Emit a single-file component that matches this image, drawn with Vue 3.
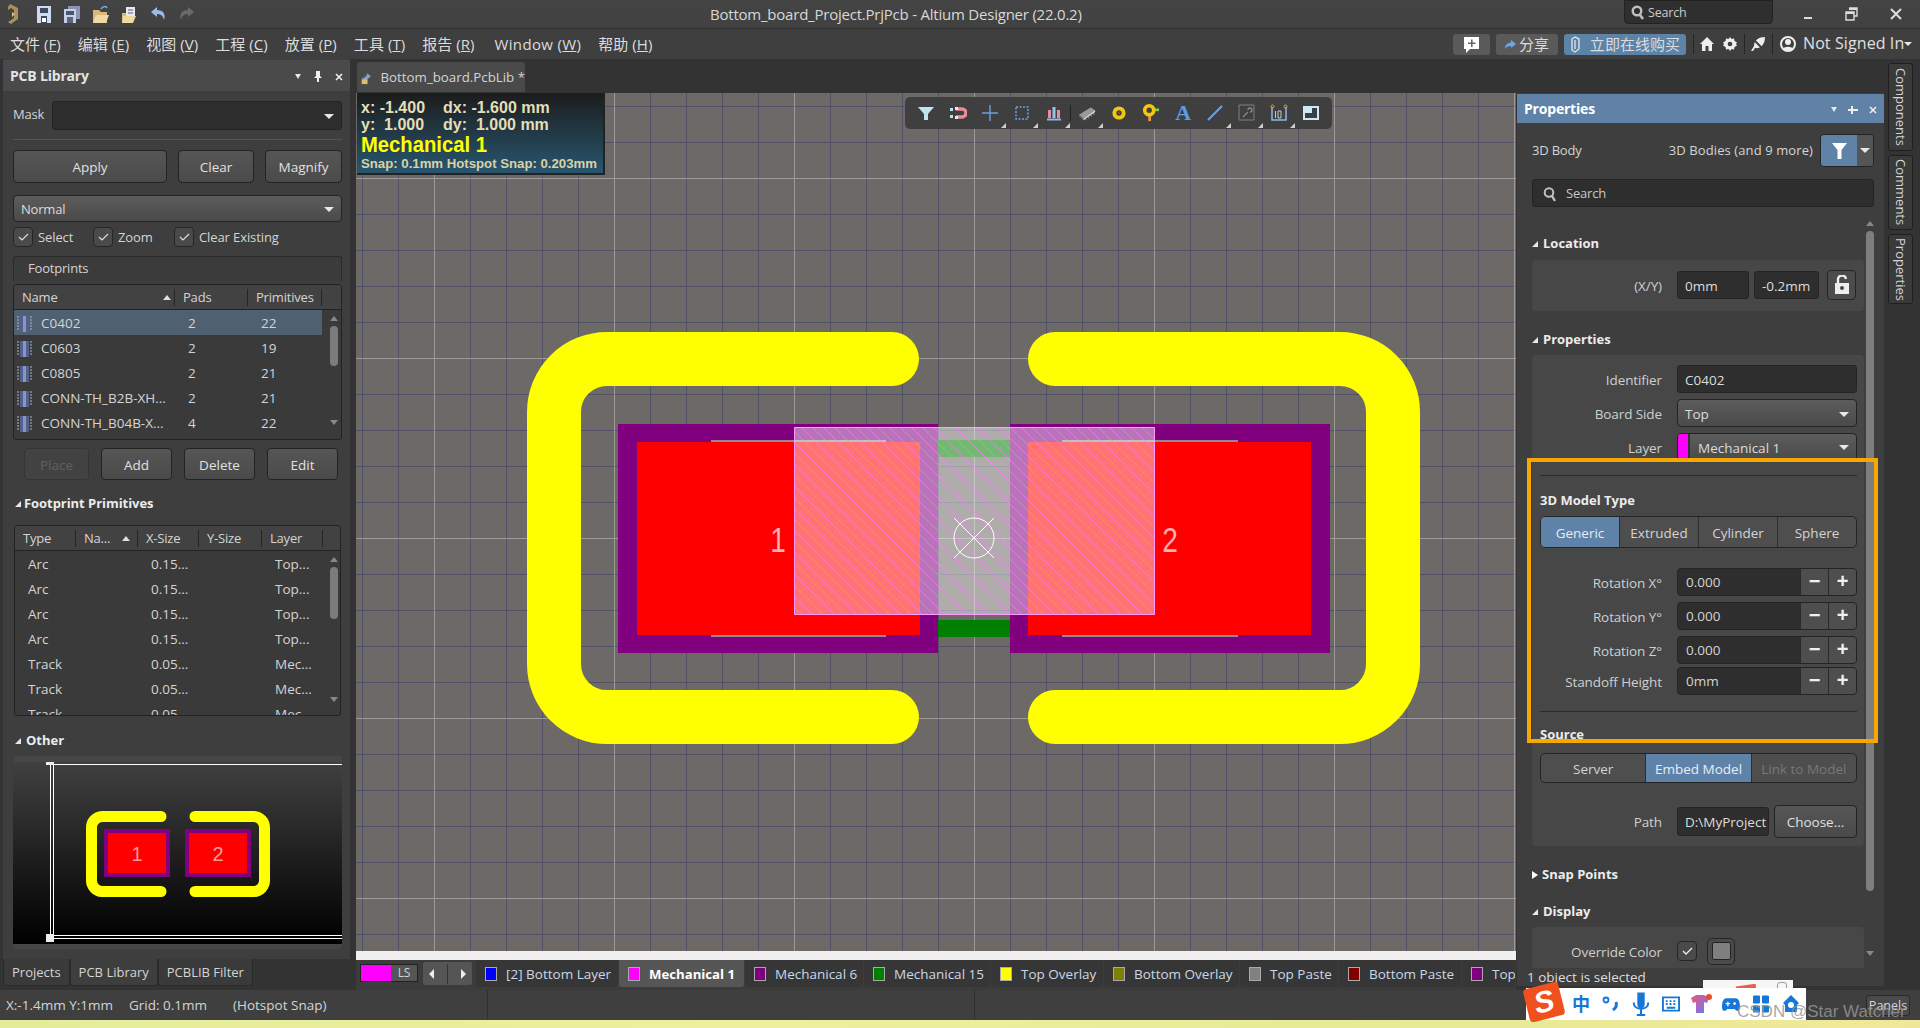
<script setup>
const menus = [
  { t: '文件', k: 'F' }, { t: '编辑', k: 'E' }, { t: '视图', k: 'V' }, { t: '工程', k: 'C' }, { t: '放置', k: 'P' },
  { t: '工具', k: 'T' }, { t: '报告', k: 'R' }, { t: 'Window', k: 'W' }, { t: '帮助', k: 'H' }
]
const footprints = [
  ['C0402', '2', '22'], ['C0603', '2', '19'], ['C0805', '2', '21'],
  ['CONN-TH_B2B-XH...', '2', '21'], ['CONN-TH_B04B-X...', '4', '22']
]
const primitives = [
  ['Arc', '0.15...', 'Top...'], ['Arc', '0.15...', 'Top...'], ['Arc', '0.15...', 'Top...'], ['Arc', '0.15...', 'Top...'],
  ['Track', '0.05...', 'Mec...'], ['Track', '0.05...', 'Mec...'], ['Track', '0.05...', 'Mec...']
]
const layers = [
  { n: '[2] Bottom Layer', c: '#0000ff', w: 142 }, { n: 'Mechanical 1', c: '#ff00ff', w: 125, on: true },
  { n: 'Mechanical 6', c: '#800080', w: 118 }, { n: 'Mechanical 15', c: '#008000', w: 126 },
  { n: 'Top Overlay', c: '#ffff00', w: 112 }, { n: 'Bottom Overlay', c: '#808000', w: 135 },
  { n: 'Top Paste', c: '#808080', w: 98 }, { n: 'Bottom Paste', c: '#800000', w: 122 }, { n: 'Top', c: '#800080', w: 53 }
]
const rotations = [
  { l: 'Rotation X°', v: '0.000' }, { l: 'Rotation Y°', v: '0.000' }, { l: 'Rotation Z°', v: '0.000' }, { l: 'Standoff Height', v: '0mm', tight: true }
]
</script>

<template>
  <div class="app">
    <header class="titlebar">
      <div class="quick">
        <svg class="logo" width="16" height="24" viewBox="0 0 16 24"><path d="M4 2l8 4v11l-7 5-3-2 6-4V8L5 6 2 8V5z" fill="#a8925a"/><path d="M6 10l3 2-3 3z" fill="#d8c48a"/></svg>
        <svg width="14" height="17" viewBox="0 0 14 17"><path d="M0 0h14v17H0z" fill="#cfdcf0"/><path d="M3 2h8v5H3z" fill="#3d4a63"/><path d="M4 10h6v7H4z" fill="#3d4a63"/><path d="M5 12h4v4H5z" fill="#fff"/></svg>
        <svg width="16" height="17" viewBox="0 0 16 17"><path d="M4 0h12v13H4z" fill="#8c94b4"/><path d="M0 3h12v14H0z" fill="#c5cfe6"/><path d="M2 5h8v4H2z" fill="#4a5570"/><path d="M3 11h6v6H3z" fill="#5a6580"/></svg>
        <svg width="16" height="17" viewBox="0 0 16 17"><path d="M0 4h6l2 2h6v11H0z" fill="#d9b878"/><path d="M3 9h13l-3 8H0z" fill="#f0d9a0"/><path d="M8 3c2-3 5-3 6-1" stroke="#7fb0e8" stroke-width="1.500" fill="none"/></svg>
        <svg width="16" height="17" viewBox="0 0 16 17"><path d="M0 7h6v10H0z" fill="#d9b878"/><path d="M4 1h9v11H4z" fill="#e8e8f0"/><path d="M6 4h5M6 7h5" stroke="#5a6580"/><path d="M1 10h13l-3 7H0z" fill="#f0d9a0"/></svg>
        <svg width="15" height="14" viewBox="0 0 15 14"><path d="M6 0L0 5l6 5V7c4 0 6 2 7 6 2-6-1-10-7-10z" fill="#9db9e8"/></svg>
        <svg width="15" height="14" viewBox="0 0 15 14"><path d="M9 0l6 5-6 5V7C5 7 3 9 2 13 0 7 3 3 9 3z" fill="#6b6b6b"/></svg>
      </div>
      <div class="wintitle">Bottom_board_Project.PrjPcb - Altium Designer (22.0.2)</div>
      <div class="winsearch">
        <svg width="14" height="15" viewBox="0 0 14 15"><circle cx="6" cy="6" r="4.300" fill="none" stroke="#c0c0c0" stroke-width="2.400"/><path d="M9 10l3 4" stroke="#c0c0c0" stroke-width="2.600"/></svg>
        <span>Search</span>
      </div>
      <div class="winbtns">
        <svg width="10" height="10" viewBox="0 0 10 10"><path d="M1 8h8v2H1z" fill="#ddd"/></svg>
        <svg width="13" height="14" viewBox="0 0 13 14"><path d="M4 1h8v8H9M1 5h8v8H1z" fill="none" stroke="#ddd" stroke-width="1.400"/><path d="M4 1h8v2H4zM1 5h8v2H1z" fill="#ddd"/></svg>
        <svg width="12" height="12" viewBox="0 0 12 12"><path d="M1 1l10 10M11 1L1 11" stroke="#ddd" stroke-width="2"/></svg>
      </div>
    </header>

    <nav class="menubar">
      <span v-for="m in menus" :key="m.k" class="menu" :class="{ win: m.k === 'W' }">{{ m.t }} (<u>{{ m.k }}</u>)</span>
      <div class="menuright">
        <span class="mbtn cmt"><svg width="17" height="17" viewBox="0 0 17 17"><path d="M1 1h15v12H7l-4 4v-4H1z" fill="#fff"/><path d="M8 3.500h1.600v3H12.500v1.600H9.600v3H8v-3H5V6.500h3z" fill="#666"/></svg></span>
        <span class="mbtn share"><svg width="11" height="11" viewBox="0 0 11 11"><path d="M6 1l5 4-5 4V7C3 7 1 8 0 10c0-4 2-6 6-6.500z" fill="#6aa6ee"/></svg>分享</span>
        <span class="mbtn buy"><svg width="11" height="17" viewBox="0 0 11 17"><path d="M2 3l3-2 4 2v10l-4 3-3-2zM5 4v9" fill="none" stroke="#d7e1ea" stroke-width="1.400"/></svg>立即在线购买</span>
        <i class="vsep v1"></i>
        <svg class="home" width="14" height="14" viewBox="0 0 14 14"><path d="M7 0l7 7h-2v7H8.500V9h-3v5H2V7H0z" fill="#eee"/></svg>
        <svg class="gear" width="14" height="14" viewBox="0 0 14 14"><path d="M7 0l1.500 2 2.500-.5.500 2.500 2.500 1.500L13 7l1 1.500-2.500 1.500-.5 2.500-2.500-.5L7 14l-1.500-2-2.500.5-.5-2.500L0 8.500 1 7 0 5.500 2.500 4 3 1.500l2.500.5z" fill="#eee"/><circle cx="7" cy="7" r="2.300" fill="#3f3f3f"/></svg>
        <i class="vsep v2"></i>
        <svg class="leaf" width="15" height="15" viewBox="0 0 15 15"><path d="M14 0C8 0 3 3 3 9l-3 5h2l2-3c6 1 10-4 10-11z" fill="#eee"/><path d="M2 2l11 11" stroke="#3f3f3f" stroke-width="2"/></svg>
        <i class="vsep v3"></i>
        <svg class="user" width="16" height="16" viewBox="0 0 16 16"><circle cx="8" cy="8" r="7" fill="none" stroke="#eee" stroke-width="2"/><circle cx="8" cy="6" r="3" fill="#eee"/><path d="M3 13c1-3 9-3 10 0l-5 2z" fill="#eee"/></svg>
        <span class="signed">Not Signed In</span><i class="caret small"></i>
      </div>
    </nav>

    <main class="main">
      <div class="leftcol">
        <section class="panel">
          <div class="phead">
            <b>PCB Library</b>
            <span class="pctl"><i class="caret tiny"></i>
              <svg width="8" height="11" viewBox="0 0 8 11"><path d="M2 0h4v5l2 2H5v4H3V7H0l2-2z" fill="#eee"/></svg>
              <svg width="8" height="8" viewBox="0 0 8 8"><path d="M1 1l6 6M7 1L1 7" stroke="#eee" stroke-width="1.600"/></svg>
            </span>
          </div>
          <div class="pbody">
            <div class="maskrow"><span>Mask</span><div class="input maskin"><i class="caret"></i></div></div>
            <div class="rule"></div>
            <div class="btnrow">
              <button class="btn b-apply">Apply</button><button class="btn b-clear">Clear</button><button class="btn b-mag">Magnify</button>
            </div>
            <div class="select normal"><span>Normal</span><i class="caret"></i></div>
            <div class="checks">
              <label class="chk c1"><i class="box"><svg width="11" height="9" viewBox="0 0 11 9"><path d="M1 4l3 3 6-6" fill="none" stroke="#ddd" stroke-width="1.200"/></svg></i>Select</label>
              <label class="chk c2"><i class="box"><svg width="11" height="9" viewBox="0 0 11 9"><path d="M1 4l3 3 6-6" fill="none" stroke="#ddd" stroke-width="1.200"/></svg></i>Zoom</label>
              <label class="chk"><i class="box"><svg width="11" height="9" viewBox="0 0 11 9"><path d="M1 4l3 3 6-6" fill="none" stroke="#ddd" stroke-width="1.200"/></svg></i>Clear Existing</label>
            </div>
            <div class="fplabel">Footprints</div>
            <div class="tbl fp">
              <div class="thead fpcols">
                <span>Name<i class="up"></i></span><span>Pads</span><span>Primitives</span><span></span>
              </div>
              <div class="tbody">
                <div class="rows">
                  <div v-for="(r, i) in footprints" :key="r[0]" class="tr fpcols" :class="{ sel: i === 0 }">
                    <span class="fpname">
                      <svg width="16" height="16" viewBox="0 0 16 16"><path d="M3 0h9v16H3z" fill="#51608e"/><path d="M6 0h3v16H6z" fill="#8b96bd"/><path d="M0 1h2M0 4h2M0 7h2M0 10h2M0 13h2M13 1h2M13 4h2M13 7h2M13 10h2M13 13h2" stroke="#b8b8b8"/></svg>
                      {{ r[0] }}
                    </span>
                    <span class="cnum">{{ r[1] }}</span><span class="cnum">{{ r[2] }}</span><span></span>
                  </div>
                </div>
                <div class="vs vs1"><i class="a-up"></i><i class="thumb t1"></i><i class="a-dn d1"></i></div>
              </div>
            </div>
            <div class="btnrow2">
              <button class="btn off" disabled>Place</button><button class="btn">Add</button><button class="btn">Delete</button><button class="btn">Edit</button>
            </div>
            <div class="sect s-prim"><i class="tri"></i>Footprint Primitives</div>
            <div class="tbl prim">
              <div class="thead pcols">
                <span>Type</span><span>Na...<i class="up u2"></i></span><span>X-Size</span><span>Y-Size</span><span>Layer</span><span></span>
              </div>
              <div class="tbody">
                <div class="rows">
                  <div v-for="(r, i) in primitives" :key="i" class="tr pcols">
                    <span class="cell">{{ r[0] }}</span><span></span><span class="cell">{{ r[1] }}</span><span></span><span class="cell">{{ r[2] }}</span><span></span>
                  </div>
                </div>
                <div class="vs vs2"><i class="a-up"></i><i class="thumb t2"></i><i class="a-dn d2"></i></div>
              </div>
            </div>
            <div class="sect s-other"><i class="tri"></i>Other</div>
            <div class="preview">
              <svg width="329" height="182" viewBox="13 762 329 182">
                <defs><linearGradient id="pv" x1="0" y1="0" x2="0" y2="1"><stop offset="0" stop-color="#404040"/><stop offset="1" stop-color="#000"/></linearGradient></defs>
                <path d="M13 762h329v182H13z" fill="url(#pv)"/>
                <path d="M54 764.500H342M50.500 764V938M53.500 764V935M54 935.500H342M54 938.500H342" stroke="#fff" fill="none"/>
                <path d="M46 762h8v3h-8zM46 934h8v8h-8z" fill="#eee"/>
                <path d="M161 816.500H102A11 11 0 0 0 91.500 828V880A11 11 0 0 0 102 891.500H161M195 816.500H254A11 11 0 0 1 264.500 828V880A11 11 0 0 1 254 891.500H195" fill="none" stroke="#ff0" stroke-width="11" stroke-linecap="round"/>
                <path d="M104 829h66v48h-66zM185 829h66v48h-66z" fill="#800080"/>
                <path d="M108 833h58v40h-58zM189 833h58v40h-58z" fill="#f00"/>
                <text x="137" y="861" class="pvt">1</text><text x="218" y="861" class="pvt">2</text>
              </svg>
            </div>
          </div>
        </section>
        <div class="paneltabs">
          <span class="ptab">Projects</span><span class="ptab on">PCB Library</span><span class="ptab">PCBLIB Filter</span>
        </div>
      </div>

      <div class="center">
        <div class="doctabs">
          <div class="doctab">
            <svg width="16" height="17" viewBox="0 0 16 17"><path d="M1 9l9-8 5 4-9 8z" fill="#8ba3bd"/><path d="M1 10h9v7H1z" fill="#d9bf70"/><path d="M3 8l6-5" stroke="#334" stroke-width="1.500"/></svg>
            Bottom_board.PcbLib *
          </div>
        </div>
        <div class="canvas">
          <svg class="board" width="1160" height="858" viewBox="356 93 1160 858">
            <defs>
              <pattern id="hatch" width="11" height="11" patternUnits="userSpaceOnUse"><path d="M-1 -1L12 12" stroke="#ff7cff" stroke-opacity=".8" stroke-width="1" stroke-dasharray="2 .6"/></pattern>
            </defs>
            <path d="M892 359H607A53 53 0 0 0 554 412V664A53 53 0 0 0 607 717H892M1055 359H1340A53 53 0 0 1 1393 412V664A53 53 0 0 1 1340 717H1055" fill="none" stroke="#ff0" stroke-width="54" stroke-linecap="round"/>
            <path d="M938 440h72v17h-72zM938 620h72v17h-72z" fill="#008000"/>
            <path d="M618 424h320v229H618zM1010 424h320v229H1010z" fill="#800080"/>
            <path d="M711 440h175v2H711zM1062 440h176v2h-176zM711 635h175v2H711zM1062 635h176v2h-176z" fill="#8f8f8f"/>
            <path d="M637 442h283v193H637zM1028 442h283v193h-283z" fill="#f00"/>
            <text class="pad" transform="translate(778 552) scale(.78 1)">1</text><text class="pad" transform="translate(1170 552) scale(.78 1)">2</text>
            <path d="M794.500 427.500h360v187h-360z" fill="#fff" fill-opacity=".45"/>
            <path d="M794.500 427.500h360v187h-360z" fill="url(#hatch)" stroke="#ff9cff"/>
            <ellipse cx="974" cy="538" rx="20" ry="20" fill="none" stroke="#fff"/>
            <path d="M954 518l40 40M994 518l-40 40" stroke="#fff"/>
          </svg>
          <div class="coord">
            <div class="co"><span>x: -1.400</span><span>dx: -1.600 mm</span></div>
            <div class="co"><span>y: &nbsp;1.000</span><span>dy: &nbsp;1.000 mm</span></div>
            <div class="colayer">Mechanical 1</div>
            <div class="cosnap">Snap: 0.1mm Hotspot Snap: 0.203mm</div>
          </div>
          <div class="toolbar">
            <span class="ti"><svg width="18" height="18" viewBox="0 0 18 18"><path d="M1 3h16l-6 7v6H7v-6z" fill="#bfe4ee"/></svg></span>
            <span class="ti"><svg width="18" height="18" viewBox="0 0 18 18"><path d="M7 5h6a4 4 0 0 1 0 8H7" fill="none" stroke="#ea8c9c" stroke-width="3.400"/><path d="M1 4h3v3H1zM1 11h3v3H1z" fill="#bfe4ee"/><path d="M6 3h3v3H6zM6 12h3v3H6z" fill="#e8e8f0"/></svg></span>
            <span class="ti more"><svg width="18" height="18" viewBox="0 0 18 18"><path d="M1 9h16M9 1v16" stroke="#6e9fe0" stroke-width="1.400"/></svg></span>
            <span class="ti more"><svg width="18" height="18" viewBox="0 0 18 18"><path d="M3 3h12v12H3z" fill="none" stroke="#6e9fe0" stroke-width="1.500" stroke-dasharray="2 1.500"/></svg></span>
            <span class="ti more"><svg width="18" height="18" viewBox="0 0 18 18"><path d="M3 6h3v8H3zM12 6h3v8h-3z" fill="#ea8c9c"/><path d="M7.500 3h3v11h-3z" fill="#8fc6e8"/><path d="M2 15.500h14" stroke="#8fb8e8" stroke-width="2"/></svg></span>
            <i class="tsep"></i>
            <span class="ti more"><svg width="18" height="18" viewBox="0 0 20 18"><path d="M1 11L14 3l5 3L6 15z" fill="#9a9a9a"/><path d="M1 11l5 4v2l-5-4z" fill="#666"/><path d="M6 15l13-9v2L6 17z" fill="#ddd"/><path d="M8 15l1 2M11 13l1 2M14 11l1 2M17 9l1 2" stroke="#6fc3e0"/></svg></span>
            <span class="ti"><svg width="14" height="14" viewBox="0 0 18 18"><circle cx="9" cy="9" r="6" fill="none" stroke="#f2c80f" stroke-width="5"/><circle cx="9" cy="9" r="1.500" fill="#7a5a10"/></svg></span>
            <span class="ti"><svg width="18" height="18" viewBox="0 0 20 20"><path d="M7 12h3v7H7z" fill="#f0964a"/><path d="M12 5h7v3h-7z" fill="#7dc95a"/><circle cx="8" cy="7" r="5" fill="none" stroke="#f2c80f" stroke-width="4"/></svg></span>
            <span class="ti tA">A</span>
            <span class="ti more"><svg width="18" height="18" viewBox="0 0 18 18"><path d="M2 16L16 2" stroke="#6e9fe0" stroke-width="2.200"/></svg></span>
            <span class="ti more"><svg width="18" height="18" viewBox="0 0 18 18"><path d="M1 1h15v15H1z" fill="none" stroke="#808080"/><path d="M5 13l5-5m0-2a2 2 0 1 1 2 2" stroke="#888" stroke-width="1.300" fill="none"/></svg></span>
            <span class="ti more"><svg width="18" height="18" viewBox="0 0 18 18"><path d="M2 3v13h14V3" fill="none" stroke="#8fb8e8" stroke-width="1.500"/><circle cx="2.500" cy="2.500" r="1.500" fill="none" stroke="#f0a040"/><circle cx="15.500" cy="2.500" r="1.500" fill="none" stroke="#f0a040"/><path d="M5.500 7v7M8 7h3v7H8z" fill="none" stroke="#bcd" stroke-width="1"/></svg></span>
            <span class="ti"><svg width="16" height="14" viewBox="0 0 16 14"><path d="M0 0h16v14H0z" fill="#cfe8f6"/><path d="M2 2h12v10H2z" fill="#3a3f45"/><path d="M2 2h7v5H2z" fill="#cfe8f6"/><path d="M9 2h5v10H2V7h7z" fill="#3a3f45"/></svg></span>
          </div>
        </div>
        <div class="whitebar"></div>
        <div class="layerbar">
          <div class="ls"><i></i><span>LS</span></div>
          <div class="lnav"><i class="tl"></i><b></b><i class="tr2"></i></div>
          <div v-for="l in layers" :key="l.n" class="ltab" :class="{ on: l.on }" :style="{ width: l.w + 'px' }">
            <i :style="{ background: l.c }"></i><span>{{ l.n }}</span>
          </div>
        </div>
      </div>

      <aside class="rightpanel">
        <div class="phead blue">
          <b>Properties</b>
          <span class="pctl r"><i class="caret tiny"></i>
            <svg width="10" height="8" viewBox="0 0 10 8"><path d="M3 0h2v3h5v2H5v3H3V5H0V3h3z" fill="#eee"/></svg>
            <svg width="8" height="8" viewBox="0 0 8 8"><path d="M1 1l6 6M7 1L1 7" stroke="#eee" stroke-width="1.600"/></svg>
          </span>
        </div>
        <div class="rbody">
          <div class="objrow">
            <span>3D Body</span>
            <span class="grow"></span>
            <span class="objs">3D Bodies (and 9 more)</span>
            <div class="filter"><span class="fb"><svg width="15" height="17" viewBox="0 0 15 17"><path d="M0 1h15L9.500 8v9h-4V8z" fill="#fff"/></svg></span><span class="fc"><i class="caret"></i></span></div>
          </div>
          <div class="input rsearch">
            <svg width="14" height="16" viewBox="0 0 14 16"><circle cx="6" cy="6.500" r="4.300" fill="none" stroke="#c0c0c0" stroke-width="2"/><path d="M9 10l3 5" stroke="#c0c0c0" stroke-width="2.400"/></svg>
            <span>Search</span>
          </div>
          <div class="scrollarea">
            <div class="content">
              <div class="sect first"><i class="tri"></i>Location</div>
              <div class="group g-loc">
                <div class="frow">
                  <label>(X/Y)</label><div class="input w72">0mm</div><div class="input w65">-0.2mm</div>
                  <span class="lock"><svg width="14" height="20" viewBox="0 0 14 20"><path d="M3 9V5a4 4 0 0 1 8-1" fill="none" stroke="#eee" stroke-width="2.400"/><path d="M0 8h14v11H0z" fill="#eee"/><circle cx="7" cy="13" r="2" fill="#444"/></svg></span>
                </div>
              </div>
              <div class="sect s2"><i class="tri"></i>Properties</div>
              <div class="group g-prop">
                <div class="frow"><label>Identifier</label><div class="input fill">C0402</div></div>
                <div class="frow m6"><label>Board Side</label><div class="select fill"><span>Top</span><i class="caret"></i></div></div>
                <div class="frow m6"><label>Layer</label><div class="select fill layersel"><i class="swatch"></i><span>Mechanical 1</span><i class="caret"></i></div></div>
                <div class="hr h1"></div>
                <div class="title t3d">3D Model Type</div>
                <div class="seg s4"><span class="on">Generic</span><span>Extruded</span><span>Cylinder</span><span>Sphere</span></div>
                <div v-for="(r, i) in rotations" :key="r.l" class="frow" :class="i === 0 ? 'm20' : r.tight ? 'm3' : 'm6'">
                  <label>{{ r.l }}</label>
                  <div class="stepper"><span class="sv">{{ r.v }}</span><span class="st">−</span><span class="st">+</span></div>
                </div>
                <div class="hr h2"></div>
                <div class="title tsrc">Source</div>
                <div class="seg s3"><span>Server</span><span class="on">Embed Model</span><span class="dis">Link to Model</span></div>
                <div class="frow pathrow"><label>Path</label><div class="input w92">D:\MyProject</div><button class="btn choose">Choose...</button></div>
              </div>
              <div class="sect closed"><i class="tri rt"></i>Snap Points</div>
              <div class="sect s2b"><i class="tri"></i>Display</div>
              <div class="group g-disp">
                <div class="frow ov">
                  <label>Override Color</label>
                  <i class="box big"><svg width="11" height="9" viewBox="0 0 11 9"><path d="M1 4l3 3 6-6" fill="none" stroke="#eee" stroke-width="1.300"/></svg></i>
                  <i class="colorbtn"><b></b></i>
                </div>
              </div>
            </div>
            <div class="rvs"><i class="a-up"></i><i class="thumb t3"></i><i class="a-dn d3"></i></div>
          </div>
          <div class="selinfo">1 object is selected</div>
        </div>
        <div class="orange"></div>
      </aside>

      <div class="sidebar">
        <span class="vtab vt1">Components</span><span class="vtab vt2">Comments</span><span class="vtab vt3">Properties</span>
      </div>
    </main>

    <footer class="status">
      <span class="s1">X:-1.4mm Y:1mm</span><span class="s2s">Grid: 0.1mm</span><span class="s3s">(Hotspot Snap)</span>
      <i class="stsep a"></i><i class="stsep b"></i>
      <span class="panelsbtn">Panels</span>
    </footer>
    <div class="strip"></div>

    <div class="ime-back"><i class="frag"></i><i class="frag2"></i></div>
    <div class="ime">
      <span class="imelogo"><b>S</b></span>
      <span class="zh">中</span>
      <svg width="18" height="20" viewBox="0 0 18 20"><circle cx="4" cy="6" r="2.500" fill="none" stroke="#1677d8" stroke-width="1.800"/><path d="M14 8c1 3 0 6-3 8" fill="none" stroke="#1677d8" stroke-width="3"/></svg>
      <svg width="18" height="24" viewBox="0 0 16 23"><path d="M5 1h6v11a3 3 0 0 1-6 0z" fill="#1677d8" stroke="#1677d8"/><path d="M1 10c0 8 14 8 14 0M8 17v5M4 22h8" fill="none" stroke="#1677d8" stroke-width="2"/></svg>
      <svg width="18" height="16" viewBox="0 0 19 16"><path d="M1 1h17v14H1z" fill="none" stroke="#1677d8" stroke-width="2"/><path d="M4 5h2M8 5h2M12 5h2M4 8h2M8 8h2M12 8h2M5 12h9" stroke="#1677d8" stroke-width="2"/></svg>
      <svg width="22" height="20" class="shirt" viewBox="0 0 22 20"><defs><linearGradient id="shirt" x1="0" y1="0" x2="1" y2="1"><stop offset="0" stop-color="#f1567a"/><stop offset="1" stop-color="#5b7dff"/></linearGradient></defs><path d="M1 4l5-3h8l5 3-2 5-3-1v11H6V8L3 9z" fill="url(#shirt)"/><circle cx="19" cy="3" r="3" fill="#f04a2a"/></svg>
      <svg width="18" height="15" viewBox="0 0 20 16"><path d="M5 1h10c4 0 5 5 5 10 0 5-4 5-6 2H6c-2 3-6 3-6-2C0 6 1 1 5 1z" fill="#1677d8"/><path d="M4 7h5M6.500 5v5" stroke="#fff" stroke-width="1.500"/><circle cx="14" cy="7" r="1.500" fill="#fff"/></svg>
      <svg width="18" height="18" viewBox="0 0 17 18"><path d="M1 1h6v7H1zM10 1h6v7h-6zM1 11h6v6H1zM10 11h6v6h-6z" fill="#1677d8" stroke="#1677d8" stroke-linejoin="round"/></svg>
      <svg width="18" height="20" viewBox="0 0 18 20"><path d="M9 1l8 8-2 2v7H3v-7L1 9z" fill="#1677d8"/><circle cx="9" cy="11" r="3" fill="#fff"/></svg>
    </div>
    <div class="mark">CSDN @Star Watcher</div>
  </div>
</template>

<style>
html, body { margin: 0; background: #333; overflow: hidden; }
</style>

<style scoped>
.app { position: relative; width: 1920px; height: 1028px; display: flex; flex-direction: column; overflow: hidden; background: #333; color: #d4d4d4; font: 13px/1.2 "Open Sans", "Noto Sans CJK SC", sans-serif; letter-spacing: -.2px; }
i { display: block; font-style: normal; }
button { font: inherit; letter-spacing: inherit; color: inherit; padding: 0; }

.titlebar { height: 28px; flex: none; display: flex; align-items: center; background: linear-gradient(#444, #414141); border-bottom: 1px solid #303030; position: relative; }
.quick { display: flex; align-items: center; width: 710px; padding-left: 6px; box-sizing: border-box; }
.quick svg { margin-right: 13px; }
.quick .logo { margin-right: 15px; }
.wintitle { width: 490px; font-size: 15px; color: #d8d8d8; letter-spacing: -.22px; white-space: nowrap; }
.winsearch { margin-left: 424px; width: 149px; height: 24px; margin-top: -4px; box-sizing: border-box; background: #2f2f2f; border: 1px solid #222; border-radius: 0 0 4px 4px; display: flex; align-items: center; gap: 3px; padding-left: 6px; font-size: 12.500px; color: #ccc; }
.winbtns { flex: 1; display: flex; align-items: center; justify-content: space-between; padding: 0 18px 0 30px; }

.menubar { height: 30px; flex: none; background: #3f3f3f; display: flex; align-items: center; padding-left: 10px; gap: 17px; font-size: 15px; color: #dcdcdc; letter-spacing: .05px; }
.menu { white-space: nowrap; }
.menu.win { margin-left: 3px; letter-spacing: .35px; }
.menuright { margin-left: auto; display: flex; align-items: center; padding-right: 8px; }
.mbtn { height: 21px; border-radius: 3px; display: flex; align-items: center; justify-content: center; background: #5a5a5a; font-size: 15px; }
.cmt { width: 37px; }
.share { width: 62px; gap: 3px; margin-left: 6px; }
.buy { width: 122px; background: #5d83a8; gap: 9px; margin-left: 6px; }
.vsep { width: 1px; height: 20px; background: #262626; }
.v1 { margin-left: 7px; } .home { margin-left: 6px; } .gear { margin-left: 9px; }
.v2 { margin-left: 7px; } .leaf { margin-left: 6px; } .v3 { margin-left: 6px; } .user { margin-left: 7px; }
.signed { font-size: 16px; color: #e0e0e0; letter-spacing: .1px; margin-left: 7px; width: 100px; white-space: nowrap; }
.caret { width: 0; height: 0; border-left: 5px solid transparent; border-right: 5px solid transparent; border-top: 5px solid #e8e8e8; }
.caret.small { border-width: 4px 4px 0; margin-left: 1px; }
.caret.tiny { border-width: 5px 3.500px 0; }

.main { height: 931px; flex: none; display: flex; }
.leftcol { width: 356px; flex: none; display: flex; flex-direction: column; padding-left: 3px; box-sizing: border-box; }
.panel { width: 347px; height: 900px; flex: none; background: #3e3e3e; }
.phead { height: 31px; margin-top: 1px; box-sizing: border-box; padding: 2px 7px 0; background: #4a4a4a; display: flex; align-items: center; justify-content: space-between; font-size: 14px; color: #e4e4e4; }
.pctl { display: flex; align-items: center; gap: 13px; }
.pbody { padding: 0 8px 0 10px; }
.maskrow { margin-top: 10px; height: 29px; display: flex; align-items: center; }
.maskrow span { width: 39px; margin-bottom: 2px; }
.input { background: #2e2e2e; border: 1px solid #242424; border-radius: 3px; box-sizing: border-box; display: flex; align-items: center; color: #dcdcdc; padding: 2px 0 0 7px; }
.maskin { width: 290px; height: 29px; justify-content: flex-end; padding-right: 7px; }
.rule { height: 1px; background: #555; margin-top: 9px; }
.btn { background: linear-gradient(#565656, #4a4a4a); border: 1px solid #232323; border-radius: 4px; box-sizing: border-box; color: #e0e0e0; padding-top: 2px; font-size: 13.500px; letter-spacing: 0; }
.btnrow { margin-top: 10px; height: 33px; display: flex; gap: 11px; }
.b-apply { width: 154px; } .b-clear { width: 76px; } .b-mag { width: 77px; }
.select { background: linear-gradient(#5c5c5c, #4a4a4a); border: 1px solid #232323; border-radius: 4px; box-sizing: border-box; display: flex; align-items: center; justify-content: space-between; padding: 2px 7px 0; color: #dcdcdc; }
.normal { margin-top: 12px; height: 27px; }
.checks { margin-top: 5px; height: 20px; display: flex; }
.chk { display: flex; align-items: center; gap: 5px; padding-top: 1px; letter-spacing: -.1px; }
.c1 { width: 80px; } .c2 { width: 81px; }
.box { width: 20px; height: 20px; box-sizing: border-box; background: #4a4a4a; border: 1px solid #252525; border-radius: 4px; display: flex; align-items: center; justify-content: center; margin-top: -1px; }
.fplabel { margin-top: 9px; height: 25px; padding-left: 14px; line-height: 23px; box-sizing: border-box; background: #3b3b3b; border: solid #2a2a2a; border-width: 1px 1px 0; border-radius: 3px 3px 0 0; }
.tbl { border: 1px solid #222; border-radius: 3px; background: #3a3a3a; overflow: hidden; box-sizing: border-box; }
.fp { margin-top: 3px; height: 156px; }
.thead { height: 25px; background: #424242; border-bottom: 1px solid #232323; box-sizing: border-box; display: grid; align-items: center; }
.thead span { position: relative; border-right: 1px solid #262626; height: 17px; line-height: 16px; padding-left: 8px; box-sizing: border-box; white-space: nowrap; }
.thead span:last-child { border: 0; }
.fpcols { display: grid; grid-template-columns: 161px 73px 74px 19px; }
.pcols { display: grid; grid-template-columns: 61px 62px 61px 63px 61px 19px; }
.up { position: absolute; right: 3px; top: 6px; width: 0; height: 0; border-left: 4.500px solid transparent; border-right: 4.500px solid transparent; border-bottom: 5px solid #ddd; }
.up.u2 { right: 7px; }
.tbody { display: flex; position: relative; height: 100%; }
.rows { width: 308px; flex: none; overflow: hidden; height: 130px; }
.prim .rows { height: 166px; }
.tr { height: 25px; box-sizing: border-box; padding-top: 2px; align-items: center; font-size: 13.500px; letter-spacing: 0; }
.tr.sel { background: #4f6070; }
.tr.sel span:last-child { background: #3a3a3a; }
.fpname { display: flex; align-items: center; gap: 8px; padding-left: 3px; white-space: nowrap; }
.cnum { padding-left: 13px; }
.cell { padding-left: 13px; white-space: nowrap; overflow: visible; width: 0; }
.vs { width: 19px; display: flex; flex-direction: column; align-items: center; position: relative; padding-left: 5px; box-sizing: border-box; }
.a-up { width: 0; height: 0; border-left: 4.500px solid transparent; border-right: 4.500px solid transparent; border-bottom: 5px solid #888; margin-top: 6px; }
.a-dn { width: 0; height: 0; border-left: 4.500px solid transparent; border-right: 4.500px solid transparent; border-top: 5px solid #888; }
.thumb { width: 8px; border-radius: 4px; background: #7c7c7c; margin-top: 5px; }
.t1 { height: 40px; } .d1 { margin-top: 54px; }
.t2 { height: 52px; } .d2 { margin-top: 78px; }
.btnrow2 { margin-top: 8px; height: 32px; display: flex; padding-left: 11px; gap: 12px; }
.btnrow2 .btn { width: 71px; }
.btnrow2 .off { width: 65px; border-color: #353535; background: #424242; color: #606060; }
.sect { height: 18px; box-sizing: border-box; padding-top: 2px; display: flex; align-items: center; font-weight: 700; font-size: 13px; color: #ececec; letter-spacing: 0; }
.tri { width: 0; height: 0; border-style: solid; border-width: 0 0 6px 6px; border-color: transparent transparent #e8e8e8 transparent; margin-right: 5px; }
.tri.rt { border-width: 4.500px 0 4.500px 6px; border-color: transparent transparent transparent #fff; margin-right: 4px; }
.s-prim { margin-top: 14px; padding-left: 2px; letter-spacing: -.05px; }
.s-prim .tri { margin-right: 3px; }
.prim { margin-top: 13px; height: 191px; margin-left: 1px; margin-right: 1px; }
.s-other { margin-top: 15px; padding-left: 2px; }
.preview { margin-top: 7px; height: 193px; background: #464646; border-radius: 4px; padding-top: 6px; box-sizing: border-box; overflow: hidden; }
.preview svg { display: block; }
.pvt { font: 20px "Liberation Sans", sans-serif; fill: #ff9a9a; text-anchor: middle; }
.paneltabs { height: 28px; display: flex; align-items: flex-start; flex: none; }
.ptab { height: 27px; padding: 2px 8px 0; display: flex; align-items: center; justify-content: center; background: #3a3a3a; border: 1px solid #2a2a2a; border-top: 0; border-radius: 0 0 3px 3px; box-sizing: border-box; letter-spacing: 0; }
.ptab.on { background: #3e3e3e; }

.center { width: 1160px; flex: none; display: flex; flex-direction: column; }
.doctabs { height: 34px; flex: none; padding: 3px 0 0 1px; box-sizing: border-box; }
.doctab { width: 168px; height: 30px; background: #4a4a4a; border-radius: 3px 3px 0 0; display: flex; align-items: center; gap: 9px; padding: 2px 0 0 4px; box-sizing: border-box; font-size: 13.300px; white-space: nowrap; letter-spacing: 0; }
.canvas { height: 858px; flex: none; position: relative; overflow: hidden; background-color: #6d6966;
  background-image: linear-gradient(90deg, #9c9a98 1px, transparent 1px), linear-gradient(#9c9a98 1px, transparent 1px), linear-gradient(90deg, #505066 1px, transparent 1px), linear-gradient(#505066 1px, transparent 1px);
  background-size: 180px 100%, 100% 180px, 36px 100%, 100% 36px;
  background-position: 78px 0, 0 85px, 6px 0, 0 13px; }
.board { position: absolute; left: 0; top: 0; }
.pad { font: 36px "Liberation Sans", sans-serif; fill: #ffb0b0; text-anchor: middle; }
.coord { position: absolute; left: 1px; top: 0; width: 248px; height: 82px; box-sizing: border-box; border: 1px solid #222; border-width: 0 2px 2px 0; padding: 6px 0 0 4px; background: linear-gradient(#1c1c1c, #28566f); font-family: "Liberation Sans", sans-serif; font-weight: 700; letter-spacing: 0; white-space: nowrap; }
.co { display: flex; font-size: 16px; line-height: 17px; color: #e4dfb6; }
.co span:first-child { width: 82px; }
.colayer { font-size: 22px; line-height: 23px; color: #ff0; transform: scaleX(.92); transform-origin: left; }
.cosnap { font-size: 13.200px; line-height: 15px; color: #d8d2a8; }
.toolbar { position: absolute; left: 549px; top: 4px; width: 427px; height: 32px; box-sizing: border-box; background: #3f3f3f; border-radius: 5px; display: flex; align-items: center; padding-left: 12px; gap: 14px; }
.ti { width: 18px; height: 18px; flex: none; position: relative; display: flex; align-items: center; justify-content: center; }
.ti.more::after { content: ""; position: absolute; right: -7px; bottom: -6px; width: 0; height: 0; border-left: 5px solid transparent; border-bottom: 5px solid #cfcfcf; }
.tsep { width: 1px; height: 16px; background: #222; margin: 0 -7px; flex: none; }
.tA { font: 700 22px "Liberation Serif", serif; color: #5c9ee6; line-height: 20px; }
.whitebar { height: 9px; flex: none; background: #f0f0f0; }
.layerbar { height: 30px; flex: none; background: #3c3c3c; display: flex; align-items: flex-start; padding-left: 4px; box-sizing: border-box; overflow: hidden; }
.ls { margin-top: 4px; width: 58px; height: 18px; display: flex; background: #555; border: 1px solid #222; box-sizing: border-box; flex: none; }
.ls i { width: 30px; background: #f0f; }
.ls span { flex: 1; text-align: center; line-height: 16px; font-size: 12px; }
.lnav { margin: 2px 4px 0 5px; width: 49px; height: 23px; flex: none; background: #555; border-radius: 2px; display: flex; align-items: center; justify-content: space-around; }
.lnav b { width: 1px; height: 20px; background: #333; }
.tl { width: 0; height: 0; border: solid transparent; border-width: 5px 5px 5px 0; border-right-color: #eee; }
.tr2 { width: 0; height: 0; border: solid transparent; border-width: 5px 0 5px 5px; border-left-color: #eee; }
.ltab { height: 27px; flex: none; margin-right: 1px; box-sizing: border-box; background: #363636; border-radius: 0 0 3px 3px; display: flex; align-items: center; gap: 9px; padding: 2px 0 0 9px; color: #c9d8e6; overflow: hidden; white-space: nowrap; font-size: 13.500px; letter-spacing: 0; }
.ltab i { width: 12px; height: 14px; margin-top: -2px; box-sizing: border-box; border: 1px solid #aaa; flex: none; }
.ltab.on { background: #565656; color: #fff; font-weight: 700; font-size: 13.200px; }

.rightpanel { position: relative; width: 367px; margin-left: 1px; flex: none; margin-top: 34px; height: 893px; background: #3e3e3e; box-sizing: border-box; }
.phead.blue { height: 29px; margin-top: 1px; background: #5f82a6; color: #fff; padding: 2px 7px 0; }
.pctl.r { gap: 11px; }
.rbody { padding: 0 10px 0 15px; position: relative; }
.objrow { padding-top: 11px; height: 33px; display: flex; align-items: center; }
.grow { flex: 1; }
.objs { margin-right: 7px; letter-spacing: .1px; }
.filter { display: flex; width: 54px; height: 33px; box-sizing: border-box; border: 1px solid #242424; border-radius: 4px; overflow: hidden; }
.fb { width: 36px; background: #5f82a6; display: flex; align-items: center; justify-content: center; }
.fc { flex: 1; background: #555; display: flex; align-items: center; justify-content: center; }
.rsearch { margin-top: 12px; height: 28px; gap: 9px; padding-left: 10px; color: #c8c8c8; }
.scrollarea { position: relative; height: 761px; overflow: hidden; }
.content { width: 332px; }
.rvs { position: absolute; right: -3px; top: 0; width: 14px; display: flex; flex-direction: column; align-items: center; }
.rvs .a-up { margin-top: 14px; }
.t3 { height: 660px; margin-top: 5px; background: #7e7e7e; }
.d3 { margin-top: 60px; }
.sect.first { margin-top: 27px; }
.group { background: #474747; border-radius: 4px; box-sizing: border-box; }
.g-loc { margin-top: 8px; height: 51px; padding-top: 11px; }
.sect.s2 { margin-top: 19px; }
.g-prop { margin-top: 7px; height: 491px; padding-top: 10px; }
.frow { display: flex; align-items: center; height: 28px; padding-right: 7px; }
.frow label { width: 130px; margin-right: 15px; padding-top: 2px; flex: none; text-align: right; color: #cfcfcf; white-space: nowrap; font-size: 13.500px; letter-spacing: -.1px; }
.frow .input { height: 100%; font-size: 13.500px; letter-spacing: 0; }
.m6 { margin-top: 6px; } .m20 { margin-top: 20px; } .m3 { margin-top: 3px; }
.w72 { width: 72px; margin-right: 5px; }
.w65 { width: 65px; }
.lock { width: 29px; height: 30px; margin-left: 8px; background: #4c4c4c; border: 1px solid #252525; border-radius: 4px; box-sizing: border-box; display: flex; align-items: center; justify-content: center; }
.fill { flex: 1; height: 100%; font-size: 13.500px; letter-spacing: 0; }
.layersel { padding-left: 0; padding-top: 0; justify-content: flex-start; overflow: hidden; }
.layersel span { padding-top: 2px; }
.swatch { width: 10px; height: 100%; background: #f0f; margin-right: 8px; border-right: 2px solid #333; }
.layersel .caret { margin-left: auto; }
.hr { height: 1px; background: #2c2c2c; margin: 0 7px 0 8px; }
.h1 { margin-top: 14px; } .h2 { margin-top: 16px; }
.title { margin-left: 8px; height: 18px; line-height: 19px; font-weight: 700; color: #ececec; letter-spacing: 0; }
.t3d { margin-top: 15px; } .tsrc { margin-top: 13px; }
.seg { margin: 0 7px 0 8px; display: flex; border: 1px solid #252525; border-radius: 5px; overflow: hidden; box-sizing: border-box; background: #4e4e4e; font-size: 13.500px; letter-spacing: 0; }
.seg span { flex: 1; padding-top: 2px; display: flex; align-items: center; justify-content: center; border-right: 1px solid #2e2e2e; }
.seg span:last-child { border: 0; }
.seg .on { background: #5f83a8; color: #e4edf5; }
.seg .dis { color: #777; }
.s4 { margin-top: 7px; height: 32px; }
.s3 { margin-top: 10px; height: 30px; }
.stepper { flex: 1; height: 100%; display: flex; background: #2e2e2e; border: 1px solid #242424; border-radius: 4px; box-sizing: border-box; overflow: hidden; }
.sv { flex: 1; line-height: 27px; padding-left: 8px; font-size: 13.500px; letter-spacing: 0; }
.st { width: 27px; background: #4e4e4e; border-left: 1px solid #2b2b2b; color: #f0f0f0; font-size: 20px; font-weight: 700; line-height: 24px; text-align: center; font-family: "Liberation Sans", sans-serif; }
.pathrow { margin-top: 22px; height: 33px; }
.pathrow .input { height: 29px; }
.w92 { width: 92px; padding-left: 7px; margin-right: 5px; white-space: nowrap; }
.choose { width: 83px; height: 33px; }
.sect.closed { margin-top: 19px; }
.sect.s2b { margin-top: 19px; }
.g-disp { margin-top: 7px; height: 60px; padding-top: 11px; }
.ov { height: 26px; }
.box.big { margin: 0 10px 0 0; background: #4a4a4a; }
.colorbtn { width: 28px; height: 27px; border: 1px solid #252525; border-radius: 5px; box-sizing: border-box; background: #4a4a4a; display: flex; align-items: center; justify-content: center; }
.colorbtn b { width: 19px; height: 18px; background: #7f7f7f; border: 1px solid #222; border-radius: 2px; box-sizing: border-box; }
.selinfo { height: 18px; line-height: 18px; margin-left: -5px; font-size: 13.500px; letter-spacing: 0; color: #ddd; }
.orange { position: absolute; left: 10px; top: 365px; width: 351px; height: 285px; box-sizing: border-box; border: 4px solid #f5a800; pointer-events: none; }

.sidebar { width: 34px; flex: none; margin-left: 2px; padding-left: 2px; box-sizing: border-box; display: flex; flex-direction: column; }
.vtab { writing-mode: vertical-rl; width: 25px; flex: none; box-sizing: border-box; background: #3a3a3a; border: 1px solid #1f1f1f; border-radius: 3px; display: flex; align-items: center; justify-content: center; font-size: 13px; letter-spacing: 0; }
.vt1 { height: 88px; margin-top: 4px; } .vt2 { height: 75px; margin-top: 4px; } .vt3 { height: 70px; margin-top: 4px; }

.status { height: 30px; flex: none; background: #3f3f3f; position: relative; display: flex; align-items: center; font-size: 13.500px; letter-spacing: 0; }
.s1 { margin-left: 6px; width: 123px; } .s2s { width: 104px; }
.stsep { position: absolute; top: 0; width: 1px; height: 30px; background: #303030; }
.stsep.a { left: 487px; } .stsep.b { left: 974px; }
.panelsbtn { position: absolute; left: 1866px; top: 5px; width: 44px; height: 21px; line-height: 20px; text-align: center; border: 1px solid #2a2a2a; border-radius: 3px; background: #4a4a4a; box-sizing: border-box; font-size: 12.500px; }
.strip { flex: 1; background: linear-gradient(90deg, #e4ec9a, #eef09e 40%, #e6eb96 70%, #f0e898); }

.ime-back { position: absolute; left: 1703px; top: 980px; width: 90px; height: 10px; background: #f6f6f6; }
.frag { position: absolute; left: 33px; top: 5px; width: 20px; height: 5px; background: #e8604a; transform: rotate(-8deg); }
.frag2 { position: absolute; left: 74px; top: 2px; width: 10px; height: 8px; box-sizing: border-box; border: 1px solid #999; border-radius: 3px 3px 0 0; }
.ime { position: absolute; left: 1526px; top: 988px; width: 280px; height: 32px; background: #fff; display: flex; align-items: center; padding-left: 46px; gap: 12px; box-sizing: border-box; }
.ime svg { flex: none; }
.shirt { margin: 0 -2px; }
.imelogo { position: absolute; left: 0; top: -3px; width: 36px; height: 34px; background: #f0501e; border-radius: 4px; transform: rotate(-14deg); display: flex; align-items: center; justify-content: center; color: #fff; font: italic 900 30px "Liberation Sans", sans-serif; }
.zh { color: #1677d8; font-size: 18px; line-height: 24px; font-weight: 700; letter-spacing: 0; width: 18px; flex: none; }
.mark { position: absolute; left: 1737px; top: 1002px; font: 17px "Liberation Sans", sans-serif; color: rgba(150, 150, 150, .85); letter-spacing: 0; white-space: nowrap; }
</style>
